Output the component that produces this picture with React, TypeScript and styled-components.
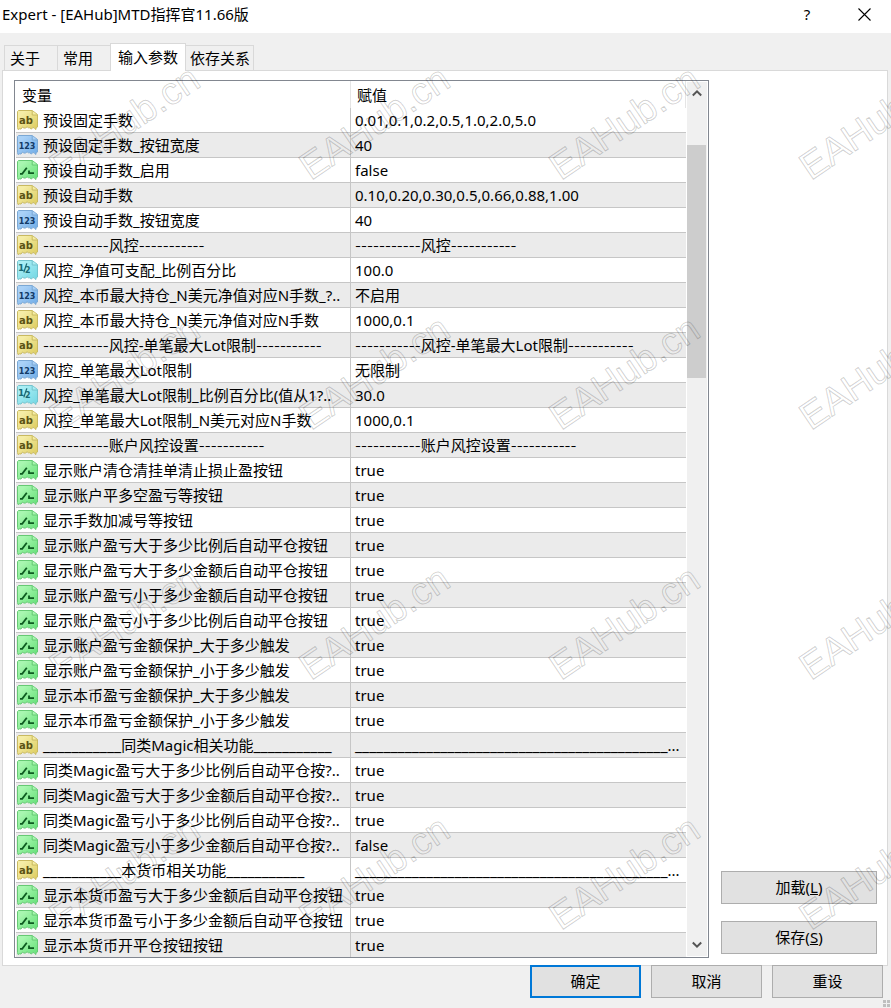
import React from "react";
import styled, { createGlobalStyle, css } from "styled-components";

const GlobalStyle = createGlobalStyle`
  *, *::before, *::after { box-sizing: border-box; }
  body {
    margin: 0;
    background: #f0f0f0;
    color: #000;
    font: 15px/20px "Noto Sans", "Noto Sans CJK SC", sans-serif;
  }
  button { font: inherit; color: inherit; margin: 0; padding: 0; }
`;

const Dialog = styled.main`
  position: relative;
  display: flex;
  flex-direction: column;
  min-height: 100vh;
  overflow: hidden;
`;

const TitleBar = styled.header`
  display: flex;
  align-items: center;
  height: 33px;
  padding: 0 8px 5px 2px;
  background: #fff;
`;

const Title = styled.h1`
  flex: 1;
  margin: 0;
  font-size: 15px;
  font-weight: 400;
`;

const TitleButton = styled.button`
  display: flex;
  align-items: center;
  justify-content: center;
  width: 38px;
  height: 28px;
  margin-left: 19px;
  border: 0;
  background: none;
`;

const TabBar = styled.div`
  display: flex;
  align-items: flex-end;
  height: 38px;
  padding: 0 4px 1px;
`;

const Tab = styled.button<{ $width: number; $active?: boolean }>`
  width: ${(p) => p.$width}px;
  height: 25px;
  padding: 0 0 1px 5px;
  border: 1px solid #d9d9d9;
  border-width: 1px 0 0 1px;
  background: #f0f0f0;
  text-align: left;
  white-space: nowrap;

  &:last-child {
    padding-left: 4px;
    border-width: 1px 1px 0 0;
  }

  ${(p) =>
    p.$active &&
    css`
      z-index: 1;
      height: 28px;
      margin-bottom: -1px;
      padding: 0 0 2px 7px;
      border-width: 1px 1px 0;
      background: #fff;
    `}
`;

const Panel = styled.section`
  display: flex;
  gap: 12px;
  margin: -1px 3px 0 2px;
  padding: 9px 10px 7px 11px;
  border: 1px solid #d9d9d9;
  background: #fff;
`;

const ListBox = styled.div`
  display: flex;
  flex: 1;
  min-width: 0;
  padding: 0 1px;
  border: 1px solid #828790;
`;

const Table = styled.table`
  flex: 1;
  display: table;
  width: 100%;
  min-width: 0;
  table-layout: fixed;
  border-collapse: separate;
  border-spacing: 0;
`;

const NameCol = styled.col`
  width: 335px;
`;

const HeadCell = styled.th`
  height: 27px;
  padding: 0 6px;
  border-right: 1px solid #e5e5e5;
  font-weight: 400;
  text-align: left;
`;

const Row = styled.tr`
  &:nth-child(even) { background: #ebebeb; }
  &:last-child > td { height: 24px; border-bottom: 0; }
`;

const NameCell = styled.td`
  height: 25px;
  padding: 0 0 0 1px;
  border-right: 1px solid #c6c6c6;
  border-bottom: 1px solid #c6c6c6;
`;

const NameLine = styled.div`
  display: flex;
  align-items: center;
  gap: 5px;
  height: 24px;
  overflow: hidden;
  white-space: nowrap;
`;

const ValueCell = styled.td`
  height: 25px;
  padding: 0 0 0 4px;
  border-bottom: 1px solid #c6c6c6;
  overflow: hidden;
  white-space: nowrap;
`;

const Dashes = styled.span`
  font-family: Inter, sans-serif;
  font-size: 13px;
`;

const Underscores = styled.span`
  font-size: 16px;
`;

const ScrollBar = styled.div`
  display: flex;
  flex-direction: column;
  width: 20px;
  margin: 1px 0 1px 1px;
  background: #f0f0f0;
`;

const ScrollArrow = styled.button`
  display: flex;
  align-items: center;
  justify-content: center;
  width: 20px;
  height: 22px;
  border: 0;
  background: none;
`;

const ScrollTrack = styled.div`
  flex: 1;
  padding: 41px 1px 0 0;
`;

const ScrollThumb = styled.div`
  height: 233px;
  background: #cdcdcd;
`;

const SideButtons = styled.div`
  display: flex;
  flex-direction: column;
  justify-content: flex-end;
  gap: 17px;
  width: 156px;
  padding-bottom: 4px;
`;

const PushButton = styled.button<{ $primary?: boolean }>`
  height: 33px;
  padding-bottom: 2px;
  border: ${(p) => (p.$primary ? "2px solid #0078d7" : "1px solid #adadad")};
  background: #e1e1e1;
  text-align: center;
`;

const Footer = styled.footer`
  display: flex;
  justify-content: flex-end;
  gap: 10px;
  margin-top: -1px;
  padding: 0 8px 10px;

  ${PushButton} { width: 111px; }
`;

const Grip = styled.svg`
  position: absolute;
  right: 0;
  bottom: 0;
`;

const WatermarkLayer = styled.div`
  position: absolute;
  inset: 0;
  z-index: 2;
  display: grid;
  grid-template-columns: repeat(4, 250px);
  grid-auto-rows: 250px;
  overflow: hidden;
  pointer-events: none;
`;

const WatermarkTile = styled.div`
  display: flex;
  align-items: flex-end;
  padding: 0 0 64px 64px;
`;

const WatermarkText = styled.span`
  font: 38px/38px "Liberation Sans", sans-serif;
  color: transparent;
  -webkit-text-stroke: 1px rgba(0, 0, 0, 0.19);
  transform: rotate(-34deg);
  transform-origin: left bottom;
`;

type Kind = "ab" | "int" | "dbl" | "bool";

const tones: Record<Kind, { light: string; deep: string; edge: string; ink: string }> = {
  ab: { light: "#f5eda6", deep: "#dccb5c", edge: "#c9ba62", ink: "#5c5214" },
  int: { light: "#a9d1f7", deep: "#6eabe6", edge: "#7ba8d4", ink: "#123a66" },
  dbl: { light: "#aaeef4", deep: "#70d6e3", edge: "#74c3cd", ink: "#1b6a74" },
  bool: { light: "#a8f7b0", deep: "#63df76", edge: "#66c974", ink: "#0d5a20" },
};

const KindMark = ({ kind, ink }: { kind: Kind; ink: string }) => {
  if (kind === "bool")
    return <path d="M3 13.8h2.2L9.8 7.8M12 10.6v2.6h5" fill="none" stroke={ink} strokeWidth="1.8" />;
  if (kind === "dbl")
    return (
      <g fill={ink} fontFamily="DejaVu Sans, sans-serif" fontWeight="700">
        <text x="1" y="11" fontSize="9">1</text>
        <path d="M9.8 3.4 6.8 12.4" stroke={ink} strokeWidth="1.3" />
        <text x="8" y="13" fontSize="8">2</text>
      </g>
    );
  return (
    <text
      x={kind === "ab" ? 9 : 10}
      y="14"
      textAnchor="middle"
      fill={ink}
      fontFamily="DejaVu Sans, sans-serif"
      fontWeight="700"
      fontSize={kind === "ab" ? 10 : 8}
    >
      {kind === "ab" ? "ab" : "123"}
    </text>
  );
};

const KindIcon = ({ kind }: { kind: Kind }) => {
  const t = tones[kind];
  return (
    <svg width="21" height="20" viewBox="0 0 21 20" aria-hidden="true" style={{ flex: "none" }}>
      <path
        d="M1.5.5h13.7l5.3 4v12.5l-1.2.6-.6 2-1.6-2-1.6.2-1.2 1.3-1.4-1.3-1.5 0-1.3-1-1.6 1.2-1.6.1-1.3-1.1-1.6 2-1.7-.2-1.2.8L.5 17.6V1.5z"
        fill={`url(#tone-${kind})`}
        stroke={t.edge}
      />
      <path d="M15.2.8v4.2h5" fill={t.light} stroke={t.edge} />
      <KindMark kind={kind} ink={t.ink} />
    </svg>
  );
};

const Gradients = () => (
  <svg width="0" height="0" style={{ position: "absolute" }} aria-hidden="true">
    <defs>
      {(Object.keys(tones) as Kind[]).map((k) => (
        <linearGradient key={k} id={`tone-${k}`} x1="0" y1="0" x2="1" y2="1">
          <stop offset="0.2" stopColor={tones[k].light} />
          <stop offset="1" stopColor={tones[k].deep} />
        </linearGradient>
      ))}
    </defs>
  </svg>
);

const D = "-".repeat(11);
const U = "_".repeat(11);

const parameters: [Kind, string, string][] = [
  ["ab", "预设固定手数", "0.01,0.1,0.2,0.5,1.0,2.0,5.0"],
  ["int", "预设固定手数_按钮宽度", "40"],
  ["bool", "预设自动手数_启用", "false"],
  ["ab", "预设自动手数", "0.10,0.20,0.30,0.5,0.66,0.88,1.00"],
  ["int", "预设自动手数_按钮宽度", "40"],
  ["ab", `${D}风控${D}`, `${D}风控${D}`],
  ["dbl", "风控_净值可支配_比例百分比", "100.0"],
  ["int", "风控_本币最大持仓_N美元净值对应N手数_?..", "不启用"],
  ["ab", "风控_本币最大持仓_N美元净值对应N手数", "1000,0.1"],
  ["ab", `${D}风控-单笔最大Lot限制${D}`, `${D}风控-单笔最大Lot限制${D}`],
  ["int", "风控_单笔最大Lot限制", "无限制"],
  ["dbl", "风控_单笔最大Lot限制_比例百分比(值从1?..", "30.0"],
  ["ab", "风控_单笔最大Lot限制_N美元对应N手数", "1000,0.1"],
  ["ab", `${D}账户风控设置${D}`, `${D}账户风控设置${D}`],
  ["bool", "显示账户清仓清挂单清止损止盈按钮", "true"],
  ["bool", "显示账户平多空盈亏等按钮", "true"],
  ["bool", "显示手数加减号等按钮", "true"],
  ["bool", "显示账户盈亏大于多少比例后自动平仓按钮", "true"],
  ["bool", "显示账户盈亏大于多少金额后自动平仓按钮", "true"],
  ["bool", "显示账户盈亏小于多少金额后自动平仓按钮", "true"],
  ["bool", "显示账户盈亏小于多少比例后自动平仓按钮", "true"],
  ["bool", "显示账户盈亏金额保护_大于多少触发", "true"],
  ["bool", "显示账户盈亏金额保护_小于多少触发", "true"],
  ["bool", "显示本币盈亏金额保护_大于多少触发", "true"],
  ["bool", "显示本币盈亏金额保护_小于多少触发", "true"],
  ["ab", `${U}同类Magic相关功能${U}`, `${"_".repeat(44)}...`],
  ["bool", "同类Magic盈亏大于多少比例后自动平仓按?..", "true"],
  ["bool", "同类Magic盈亏大于多少金额后自动平仓按?..", "true"],
  ["bool", "同类Magic盈亏小于多少比例后自动平仓按?..", "true"],
  ["bool", "同类Magic盈亏小于多少金额后自动平仓按?..", "false"],
  ["ab", `${U}本货币相关功能${U}`, `${"_".repeat(44)}...`],
  ["bool", "显示本货币盈亏大于多少金额后自动平仓按钮", "true"],
  ["bool", "显示本货币盈亏小于多少金额后自动平仓按钮", "true"],
  ["bool", "显示本货币开平仓按钮按钮", "true"],
];

// Long runs of dashes or underscores act as section rules inside a cell.
const RuledText = ({ text }: { text: string }) => (
  <span>
    {text.split(/(-{3,}|_{3,})/).map((part, i) => {
      if (part.startsWith("---")) return <Dashes key={i}>{part}</Dashes>;
      if (part.startsWith("___")) return <Underscores key={i}>{part}</Underscores>;
      return part;
    })}
  </span>
);

const Chevron = ({ down }: { down?: boolean }) => (
  <svg width="10" height="8" viewBox="0 0 10 8" aria-hidden="true">
    <path d={down ? "M.8 1.5 5 5.7 9.2 1.5" : "M.8 6.5 5 2.3 9.2 6.5"} fill="none" stroke="#555" strokeWidth="2" />
  </svg>
);

export default function App() {
  return (
    <Dialog>
      <GlobalStyle />
      <Gradients />
      <TitleBar>
        <Title>Expert - [EAHub]MTD指挥官11.66版</Title>
        <TitleButton aria-label="帮助">?</TitleButton>
        <TitleButton aria-label="关闭">
          <svg width="13" height="13" viewBox="0 0 13 13" aria-hidden="true">
            <path d="M.5.5l12 12M12.5.5l-12 12" stroke="#000" strokeWidth="1.1" />
          </svg>
        </TitleButton>
      </TitleBar>
      <TabBar role="tablist">
        <Tab role="tab" $width={53}>关于</Tab>
        <Tab role="tab" $width={53}>常用</Tab>
        <Tab role="tab" aria-selected $width={76} $active>输入参数</Tab>
        <Tab role="tab" $width={68}>依存关系</Tab>
      </TabBar>
      <Panel>
        <ListBox>
          <Table>
            <colgroup>
              <NameCol />
              <col />
            </colgroup>
            <thead>
              <tr>
                <HeadCell>变量</HeadCell>
                <HeadCell>赋值</HeadCell>
              </tr>
            </thead>
            <tbody>
              {parameters.map(([kind, name, value], i) => (
                <Row key={i}>
                  <NameCell>
                    <NameLine>
                      <KindIcon kind={kind} />
                      <RuledText text={name} />
                    </NameLine>
                  </NameCell>
                  <ValueCell>
                    <RuledText text={value} />
                  </ValueCell>
                </Row>
              ))}
            </tbody>
          </Table>
          <ScrollBar>
            <ScrollArrow aria-label="向上滚动"><Chevron /></ScrollArrow>
            <ScrollTrack><ScrollThumb /></ScrollTrack>
            <ScrollArrow aria-label="向下滚动"><Chevron down /></ScrollArrow>
          </ScrollBar>
        </ListBox>
        <SideButtons>
          <PushButton>加载(<u>L</u>)</PushButton>
          <PushButton>保存(<u>S</u>)</PushButton>
        </SideButtons>
      </Panel>
      <Footer>
        <PushButton $primary>确定</PushButton>
        <PushButton>取消</PushButton>
        <PushButton>重设</PushButton>
      </Footer>
      <Grip width="8" height="8" viewBox="0 0 8 8" aria-hidden="true">
        <path d="M0 0h3v3H0zM4 0h3v3H4zM0 4h3v3H0zM4 4h3v3H4z" fill="#bfbfbf" />
      </Grip>
      <WatermarkLayer aria-hidden="true">
        {Array.from({ length: 16 }, (_, i) => (
          <WatermarkTile key={i}>
            <WatermarkText>EAHub.cn</WatermarkText>
          </WatermarkTile>
        ))}
      </WatermarkLayer>
    </Dialog>
  );
}
